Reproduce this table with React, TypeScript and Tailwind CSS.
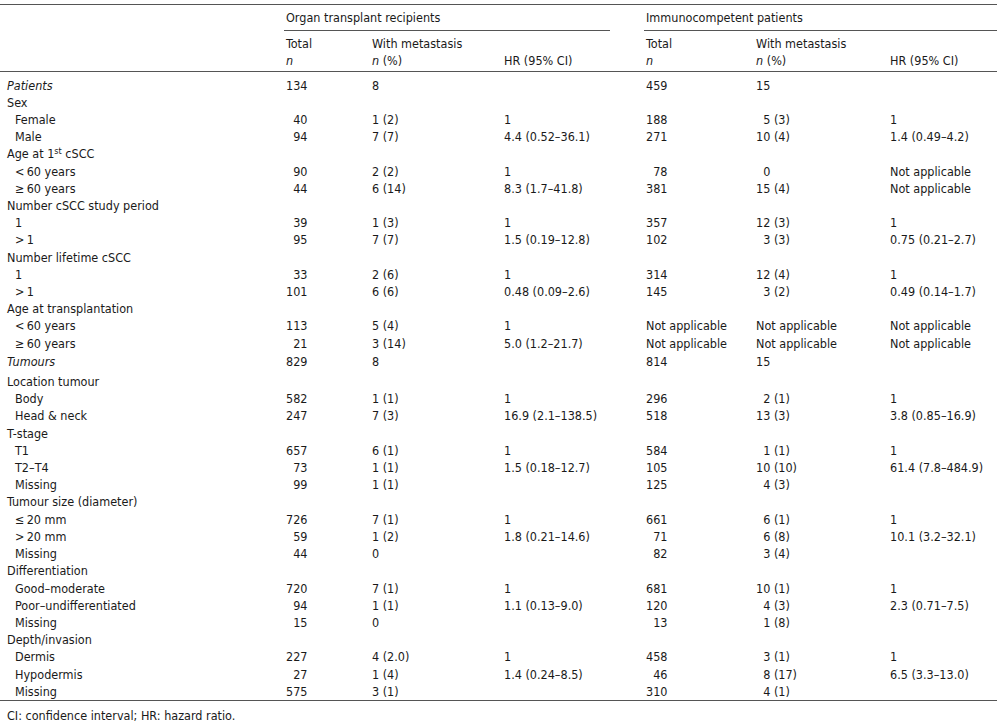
const ROWS: Array<{
  label: React.ReactNode;
  kind: "section" | "group" | "item";
  cells?: [string, string, string, string, string, string];
  pad?: string;
}> = [
  { label: "Patients", kind: "section", cells: ["134", "8", "", "459", "15", ""], pad: "pt-[5px]" },
  { label: "Sex", kind: "group" },
  { label: "Female", kind: "item", cells: ["40", "1 (2)", "1", "188", "5 (3)", "1"] },
  { label: "Male", kind: "item", cells: ["94", "7 (7)", "4.4 (0.52–36.1)", "271", "10 (4)", "1.4 (0.49–4.2)"] },
  {
    label: (
      <>
        Age at 1<sup className="text-[9px]">st</sup> cSCC
      </>
    ),
    kind: "group",
  },
  { label: "<\u200960 years", kind: "item", cells: ["90", "2 (2)", "1", "78", "0", "Not applicable"] },
  { label: "≥\u200960 years", kind: "item", cells: ["44", "6 (14)", "8.3 (1.7–41.8)", "381", "15 (4)", "Not applicable"] },
  { label: "Number cSCC study period", kind: "group" },
  { label: "1", kind: "item", cells: ["39", "1 (3)", "1", "357", "12 (3)", "1"] },
  { label: ">\u20091", kind: "item", cells: ["95", "7 (7)", "1.5 (0.19–12.8)", "102", "3 (3)", "0.75 (0.21–2.7)"] },
  { label: "Number lifetime cSCC", kind: "group" },
  { label: "1", kind: "item", cells: ["33", "2 (6)", "1", "314", "12 (4)", "1"] },
  { label: ">\u20091", kind: "item", cells: ["101", "6 (6)", "0.48 (0.09–2.6)", "145", "3 (2)", "0.49 (0.14–1.7)"] },
  { label: "Age at transplantation", kind: "group" },
  { label: "<\u200960 years", kind: "item", cells: ["113", "5 (4)", "1", "Not applicable", "Not applicable", "Not applicable"] },
  { label: "≥\u200960 years", kind: "item", cells: ["21", "3 (14)", "5.0 (1.2–21.7)", "Not applicable", "Not applicable", "Not applicable"] },
  { label: "Tumours", kind: "section", cells: ["829", "8", "", "814", "15", ""], pad: "pt-[1px]" },
  { label: "Location tumour", kind: "group", pad: "pt-[3px]" },
  { label: "Body", kind: "item", cells: ["582", "1 (1)", "1", "296", "2 (1)", "1"] },
  { label: "Head & neck", kind: "item", cells: ["247", "7 (3)", "16.9 (2.1–138.5)", "518", "13 (3)", "3.8 (0.85–16.9)"] },
  { label: "T-stage", kind: "group" },
  { label: "T1", kind: "item", cells: ["657", "6 (1)", "1", "584", "1 (1)", "1"] },
  { label: "T2–T4", kind: "item", cells: ["73", "1 (1)", "1.5 (0.18–12.7)", "105", "10 (10)", "61.4 (7.8–484.9)"] },
  { label: "Missing", kind: "item", cells: ["99", "1 (1)", "", "125", "4 (3)", ""] },
  { label: "Tumour size (diameter)", kind: "group" },
  { label: "≤\u200920 mm", kind: "item", cells: ["726", "7 (1)", "1", "661", "6 (1)", "1"] },
  { label: ">\u200920 mm", kind: "item", cells: ["59", "1 (2)", "1.8 (0.21–14.6)", "71", "6 (8)", "10.1 (3.2–32.1)"] },
  { label: "Missing", kind: "item", cells: ["44", "0", "", "82", "3 (4)", ""] },
  { label: "Differentiation", kind: "group" },
  { label: "Good–moderate", kind: "item", cells: ["720", "7 (1)", "1", "681", "10 (1)", "1"] },
  { label: "Poor–undifferentiated", kind: "item", cells: ["94", "1 (1)", "1.1 (0.13–9.0)", "120", "4 (3)", "2.3 (0.71–7.5)"] },
  { label: "Missing", kind: "item", cells: ["15", "0", "", "13", "1 (8)", ""] },
  { label: "Depth/invasion", kind: "group" },
  { label: "Dermis", kind: "item", cells: ["227", "4 (2.0)", "1", "458", "3 (1)", "1"] },
  { label: "Hypodermis", kind: "item", cells: ["27", "1 (4)", "1.4 (0.24–8.5)", "46", "8 (17)", "6.5 (3.3–13.0)"] },
  { label: "Missing", kind: "item", cells: ["575", "3 (1)", "", "310", "4 (1)", ""] },
];

// pad leading number with figure spaces so digits line up
function pad(value: string, digits: number) {
  const m = value.match(/^\d+/);
  if (!m) return value;
  return "\u2007".repeat(Math.max(0, digits - m[0].length)) + value;
}

const cell = "pl-[2px] whitespace-nowrap";
const rule = "border-[#555555]";

export default function App() {
  return (
    <div className="min-h-[726px] w-[1000px] bg-white pt-[4px] text-[12.5px] leading-[17.2px] text-[#1a1a1a] font-[family-name:'DejaVu_Sans_Condensed','DejaVu_Sans',sans-serif]">
      <table className="w-[997px] table-fixed border-separate border-spacing-0 text-left">
        <colgroup>
          <col className="w-[284px]" />
          <col className="w-[86px]" />
          <col className="w-[132px]" />
          <col className="w-[108px]" />
          <col className="w-[34px]" />
          <col className="w-[110px]" />
          <col className="w-[134px]" />
          <col className="w-[109px]" />
        </colgroup>
        <thead>
          <tr>
            <th rowSpan={2} className={`border-t border-b ${rule}`} />
            <th colSpan={3} className={`${cell} align-top border-t border-b ${rule} pt-[4px] pb-[4px] font-normal`}>
              Organ transplant recipients
            </th>
            <th className={`border-t ${rule}`} />
            <th colSpan={3} className={`${cell} align-top border-t border-b ${rule} pt-[4px] pb-[4px] font-normal`}>
              Immunocompetent patients
            </th>
          </tr>
          <tr>
            {[
              ["Total", "n"],
              ["With metastasis", "n (%)"],
              ["", "HR (95% CI)"],
              ["", ""],
              ["Total", "n"],
              ["With metastasis", "n (%)"],
              ["", "HR (95% CI)"],
            ].map(([a, b], i) => (
              <th key={i} className={`${cell} align-bottom border-b ${rule} pt-[4px] pb-[1px] font-normal`}>
                <div>{a || "\u00a0"}</div>
                <div>
                  {b.startsWith("n") ? (
                    <>
                      <i>n</i>
                      {b.slice(1)}
                    </>
                  ) : (
                    b || "\u00a0"
                  )}
                </div>
              </th>
            ))}
          </tr>
        </thead>
        <tbody>
          {ROWS.map((r, i) => {
            const last = i === ROWS.length - 1;
            const top = r.pad ?? "";
            const bottom = last ? `border-b ${rule}` : "";
            const c = r.cells;
            return (
              <tr key={i}>
                <td
                  className={`whitespace-nowrap align-top ${top} ${bottom} ${
                    r.kind === "item" ? "pl-[15px]" : "pl-[7px]"
                  } ${r.kind === "section" ? "italic" : ""}`}
                >
                  {r.label}
                </td>
                <td className={`${cell} align-top ${top} ${bottom}`}>{c ? pad(c[0], 3) : ""}</td>
                <td className={`${cell} align-top ${top} ${bottom}`}>{c ? c[1] : ""}</td>
                <td className={`${cell} align-top ${top} ${bottom}`}>{c ? c[2] : ""}</td>
                <td className={`${top} ${bottom}`} />
                <td className={`${cell} align-top ${top} ${bottom}`}>{c ? pad(c[3], 3) : ""}</td>
                <td className={`${cell} align-top ${top} ${bottom}`}>{c ? pad(c[4], 2) : ""}</td>
                <td className={`${cell} align-top ${top} ${bottom}`}>{c ? c[5] : ""}</td>
              </tr>
            );
          })}
        </tbody>
      </table>
      <p className="pl-[7px] pt-[6px]">CI: confidence interval; HR: hazard ratio.</p>
    </div>
  );
}
